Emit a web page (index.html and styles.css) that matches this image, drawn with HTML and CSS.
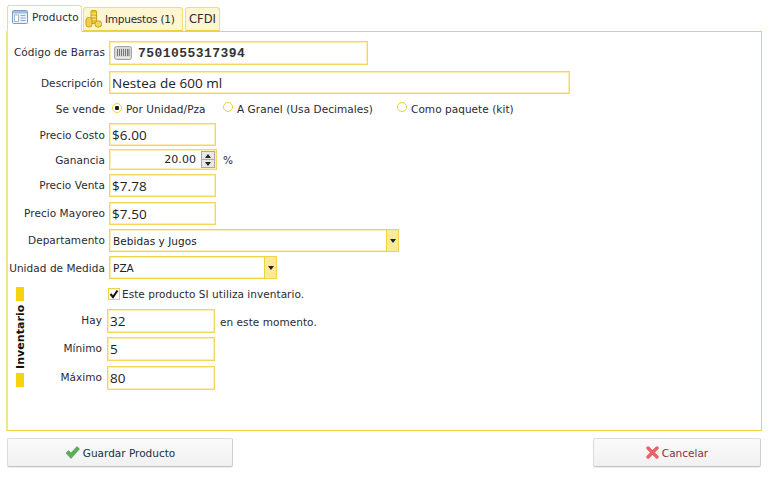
FILE: index.html
```html
<!DOCTYPE html>
<html lang="es">
<head>
<meta charset="utf-8">
<title>Producto</title>
<link rel="stylesheet" href="styles.css">
</head>
<body>
<div class="tabs">
  <div class="tab active">
    <svg class="ico" width="16" height="14" viewBox="0 0 16 14"><rect x=".5" y=".5" width="15" height="13" rx="1" fill="#eaf2fb" stroke="#7d9cc4"/><rect x="1" y="1" width="14" height="2.5" fill="#9fbde0"/><rect x="2.5" y="5" width="4" height="6.5" fill="#fff" stroke="#8ea9cc" stroke-width=".8"/><path d="M8.5 5.5h5M8.5 8h5M8.5 10.5h5" stroke="#8ea9cc"/></svg>
    <span>Producto</span>
  </div>
  <div class="tab">
    <svg class="ico" width="17" height="18" viewBox="0 0 17 18"><rect x="6" y=".5" width="5.5" height="13" rx="1" fill="#e8c03a" stroke="#c9a020"/><path d="M6.5 3.5h4.5M6.5 6.5h4.5M6.5 9.5h4.5" stroke="#f7e27a"/><rect x="1" y="7.5" width="6" height="9.5" rx="2.5" fill="#f2cf45" stroke="#c9a020"/><rect x="10" y="11" width="6.5" height="6" rx="2.5" fill="#f4d654" stroke="#c9a020"/></svg>
    <span>Impuestos (1)</span>
  </div>
  <div class="tab"><span>CFDI</span></div>
</div>

<main class="panel">
  <div class="row r-codigo">
    <label class="lbl lbl-up">Código de Barras</label>
    <div class="field w-codigo code">
      <svg class="barcode" width="18" height="14" viewBox="0 0 18 14"><rect x=".5" y=".5" width="17" height="13" rx="2" fill="#d8d8d8" stroke="#a5a5a5"/><path d="M3.5 3v7M5.5 3v7M7.5 3v7M9.5 3v7M11.5 3v7M13.5 3v7M15 3v7" stroke="#777"/><path d="M2 11.5h14" stroke="#eee"/></svg>
      <span>7501055317394</span>
    </div>
  </div>
  <div class="row r-desc">
    <label class="lbl lbl-desc">Descripción</label>
    <div class="field w-desc big">Nestea de 600 ml</div>
  </div>
  <div class="row r-vende">
    <label class="lbl">Se vende</label>
    <div class="radios">
      <span class="radio sel">Por Unidad/Pza</span>
      <span class="radio">A Granel (Usa Decimales)</span>
      <span class="radio">Como paquete (kit)</span>
    </div>
  </div>
  <div class="row r-costo">
    <label class="lbl">Precio Costo</label>
    <div class="field w-price big">$6.00</div>
  </div>
  <div class="row r-gan">
    <label class="lbl">Ganancia</label>
    <div class="field w-price spin">
      <span class="spin-val">20.00</span>
      <span class="spin-btns"><i class="up"></i><i class="down"></i></span>
    </div>
    <span class="after">%</span>
  </div>
  <div class="row r-venta">
    <label class="lbl lbl-up">Precio Venta</label>
    <div class="field w-price big">$7.78</div>
  </div>
  <div class="row r-mayoreo">
    <label class="lbl lbl-up">Precio Mayoreo</label>
    <div class="field w-price big">$7.50</div>
  </div>
  <div class="row r-depto">
    <label class="lbl lbl-up">Departamento</label>
    <div class="field select w-depto"><span>Bebidas y Jugos</span><b class="arrow"></b></div>
  </div>
  <div class="row r-unidad">
    <label class="lbl">Unidad de Medida</label>
    <div class="field select w-unidad"><span>PZA</span><b class="arrow"></b></div>
  </div>

  <section class="inv">
    <div class="inv-side">
      <span class="inv-bar"></span>
      <span class="inv-title">Inventario</span>
      <span class="inv-bar"></span>
    </div>
    <div class="inv-body">
      <div class="check-row">
        <span class="check"><svg width="10" height="10" viewBox="0 0 10 10"><path d="M1.5 5l2.5 3 4.5-6.5" fill="none" stroke="#111" stroke-width="2"/></svg></span>
        <span>Este producto SI utiliza inventario.</span>
      </div>
      <div class="row inv-row">
        <label class="lbl lbl-inv lbl-up">Hay</label>
        <div class="field w-inv big">32</div>
        <span class="after after-inv">en este momento.</span>
      </div>
      <div class="row inv-row">
        <label class="lbl lbl-inv lbl-up">Mínimo</label>
        <div class="field w-inv big">5</div>
      </div>
      <div class="row inv-row">
        <label class="lbl lbl-inv lbl-up">Máximo</label>
        <div class="field w-inv big">80</div>
      </div>
    </div>
  </section>
</main>

<footer class="actions">
  <button class="btn btn-save" type="button">
    <svg width="15" height="13" viewBox="0 0 15 13"><path d="M1 7l2.5-2.5L6 7l6-6.5L14.5 3 6 12.5z" fill="#5cae58" stroke="#4b9a48" stroke-width=".6"/></svg>
    <span>Guardar Producto</span>
  </button>
  <button class="btn btn-cancel" type="button">
    <svg width="13" height="13" viewBox="0 0 13 13"><path d="M2 2l9 9M11 2l-9 9" stroke="#ee5f65" stroke-width="3.4" stroke-linecap="round"/></svg>
    <span>Cancelar</span>
  </button>
</footer>
</body>
</html>
```
FILE: styles.css
```css
* { box-sizing: border-box; }
html, body { height: 100%; }
body {
  margin: 0;
  padding: 4px 6px 0;
  width: 768px;
  height: 485px;
  overflow: hidden;
  background: #fff;
  font-family: "DejaVu Sans", sans-serif;
  font-size: 10.5px;
  letter-spacing: .05px;
  color: #2a2a33;
}
.tabs { display: flex; gap: 2px; padding-left: 1px; height: 27px; align-items: flex-end; position: relative; z-index: 1; }
.tab {
  display: flex; align-items: center; gap: 3px;
  height: 24px; padding: 0 4px 0 3px;
  border: 1px solid #f5dc73; border-bottom: 1px solid #f0d040;
  border-radius: 3px 3px 0 0;
  background: #fdf6d0;
  white-space: nowrap;
}
.tab:nth-child(2) { width: 100px; padding: 0 0 1px 1px; letter-spacing: -.25px; }
.tab:nth-child(3) { width: 35px; justify-content: center; padding: 0 0 1px; font-size: 11.5px; }
.tab.active {
  width: 75px; height: 27px; padding: 0 0 3px 4px; gap: 4px; margin-right: -1px;
  background: #fff; border-bottom-color: #fff; margin-bottom: -1px;
}
.panel {
  height: 400px;
  border: 1px solid #f0d23c;
  border-left: 2px solid #f5e38c;
  padding-top: 9px;
}
.row { display: flex; align-items: center; margin-left: -1px; }
.lbl { width: 98px; text-align: right; flex: none; margin-right: 4px; white-space: nowrap; }
.lbl-up { padding-bottom: 2px; }
.lbl-desc { width: 96px; margin-right: 6px; }
.field {
  border: 1px solid #f4d85c;
  box-shadow: inset 0 0 0 1px #fbeeb0;
  background: #fff;
  display: flex; align-items: center;
  padding: 0 2px;
  flex: none;
  color: #222;
}
.big { font-family: "Open Sans", sans-serif; font-size: 13.5px; }
.code { font-family: "Liberation Mono", monospace; font-weight: 700; font-size: 13px; letter-spacing: .45px; color: #333; padding-left: 4px; gap: 6px; }
.w-codigo { width: 259px; height: 24px; }
.w-desc { width: 461px; height: 23px; }
.w-price { width: 107px; height: 23px; }
.w-depto { width: 290px; height: 23px; }
.w-unidad { width: 168px; height: 23px; }
.w-inv { width: 108px; height: 24px; }

.r-codigo { height: 24px; }
.r-desc { margin-top: 6px; height: 23px; }
.r-vende { margin-top: 5px; height: 19px; }
.r-costo { margin-top: 5px; height: 23px; }
.r-gan { margin-top: 3px; height: 21px; }
.r-venta { margin-top: 4px; height: 23px; }
.r-mayoreo { margin-top: 5px; height: 23px; }
.r-depto { margin-top: 4px; height: 23px; }
.r-unidad { margin-top: 4px; height: 23px; }

.radios { display: flex; margin-left: 3px; }
.radio { display: flex; align-items: center; gap: 4px; white-space: nowrap; }
.radio::before {
  content: ""; width: 8px; height: 8px; border-radius: 50%;
  border: 1px solid #f0d040; background: #fff;
  margin-top: -3px;
}
.radio.sel::before { background: radial-gradient(circle, #222 0 2px, #fff 2.5px); margin-top: -1px; }
.radio:nth-child(1) { width: 111px; }
.radio:nth-child(2) { width: 174px; }

.spin { height: 21px; width: 108px; border-color: #f5d95f; padding: 0 1px 0 3px; justify-content: flex-end; gap: 2px; }
.spin-val { font-size: 11px; margin-right: 3px; }
.spin-btns { display: flex; flex-direction: column; width: 14px; height: 17px; border: 1px solid #a9a9a9; background: #e8e8e8; }
.spin-btns i { flex: 1; display: flex; align-items: center; justify-content: center; }
.spin-btns .up { border-bottom: 1px solid #a9a9a9; }
.spin-btns .up::after { content: ""; border: 3px solid transparent; border-bottom: 4px solid #222; border-top: 0; }
.spin-btns .down::after { content: ""; border: 3px solid transparent; border-top: 4px solid #222; border-bottom: 0; }
.after { margin-left: 6px; }

.select { padding: 0 0 0 3px; justify-content: space-between; font-size: 10.5px; border-color: #f2d44a; }
.select .arrow {
  width: 12px; height: 100%;
  background: #faea98;
  border-left: 1px solid #f0d23c;
  display: flex; align-items: center; justify-content: center;
}
.select .arrow::after { content: ""; border: 3px solid transparent; border-top: 4px solid #222; border-bottom: 0; }

.inv { display: flex; margin-top: 8px; margin-left: -1px; }
.inv .row { margin-left: 0; }
.inv-side {
  width: 8px; margin-left: 9px; height: 100px;
  display: flex; flex-direction: column; align-items: center; gap: 2px;
}
.inv-bar { width: 8px; height: 14px; background: #f5d30f; flex: none; }
.inv-title {
  writing-mode: vertical-rl; transform: rotate(180deg);
  font-weight: 700; color: #111; height: 68px; text-align: center; white-space: nowrap; font-size: 11px;
}
.check-row { display: flex; align-items: center; gap: 2px; height: 14px; margin-left: 84px; }
.check { width: 10px; height: 10px; border: 1px solid #f0d040; background: #fff; display: flex; align-items: center; justify-content: center; box-sizing: content-box; }
.inv-row { margin-top: 4px; height: 24px; }
.inv-row:last-child { margin-top: 5px; }
.check-row + .inv-row { margin-top: 8px; }
.lbl-inv { width: 78px; margin-right: 5px; }
.after-inv { margin-left: 5px; padding-top: 2px; }

.actions { display: flex; justify-content: space-between; padding: 7px 1px 0 1px; }
.btn {
  height: 29px; display: flex; align-items: center; justify-content: center; gap: 3px;
  border: 1px solid #dcdcdc; border-bottom-color: #c4c4c4; border-right-color: #cfcfcf;
  border-radius: 2px;
  background: linear-gradient(#fafafa, #f1f1f1);
  font-family: inherit; font-size: 10.5px; padding: 0;
  box-shadow: 0 1px 1px rgba(0,0,0,.08);
}
.btn-save { width: 226px; color: #22303a; }
.btn-cancel { width: 168px; color: #8a3038; }
```
